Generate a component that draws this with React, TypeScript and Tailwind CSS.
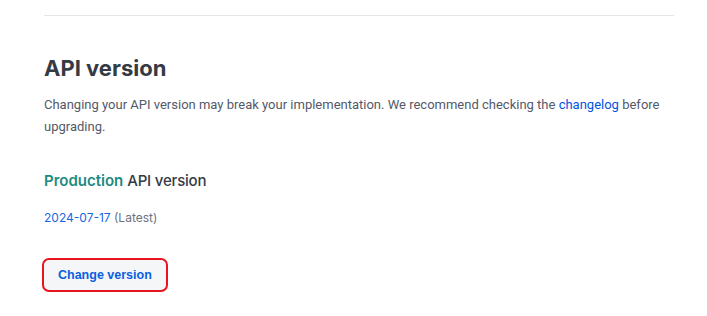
export default function App() {
  return (
    <div className="min-h-screen bg-white" style={{ fontFamily: "Inter, 'Noto Sans', sans-serif" }}>
      <div className="px-[44px] pt-[15px]">
        <div className="w-[630px] border-t border-[#e3e5e8]" />
        <h2 className="mt-[38px] text-[22px] font-bold leading-[28px] text-[#353a44]">API version</h2>
        <p
          className="mt-[12px] w-[630px] text-[13px] leading-[22px] text-[#545969]"
          style={{ fontFamily: "Roboto, 'Noto Sans', sans-serif" }}
        >
          Changing your API version may break your implementation. We recommend checking the{" "}
          <a className="text-[#0055de]">changelog</a> before upgrading.
        </p>
        <div className="mt-[32px] text-[15px] font-medium leading-[22px] text-[#353a44]">
          <span className="font-semibold text-[#1d8a82]">Production</span>{" "}
          <span className="tracking-[-0.2px]">API version</span>
        </div>
        <div className="mt-[17px] text-[12px] leading-[18px] text-[#6c7180]">
          <span className="text-[#1a66e0]">2024-07-17</span> (Latest)
        </div>
        <button
          className="-ml-[2px] mt-[31px] flex h-[34px] items-center rounded-[7px] border-2 border-[#e8141f] bg-[#f5f6f8] px-[14px] text-[12.5px] font-bold text-[#0b5ee0]"
          style={{ fontFamily: "'Liberation Sans', Arial, sans-serif" }}
        >
          Change version
        </button>
      </div>
    </div>
  );
}
